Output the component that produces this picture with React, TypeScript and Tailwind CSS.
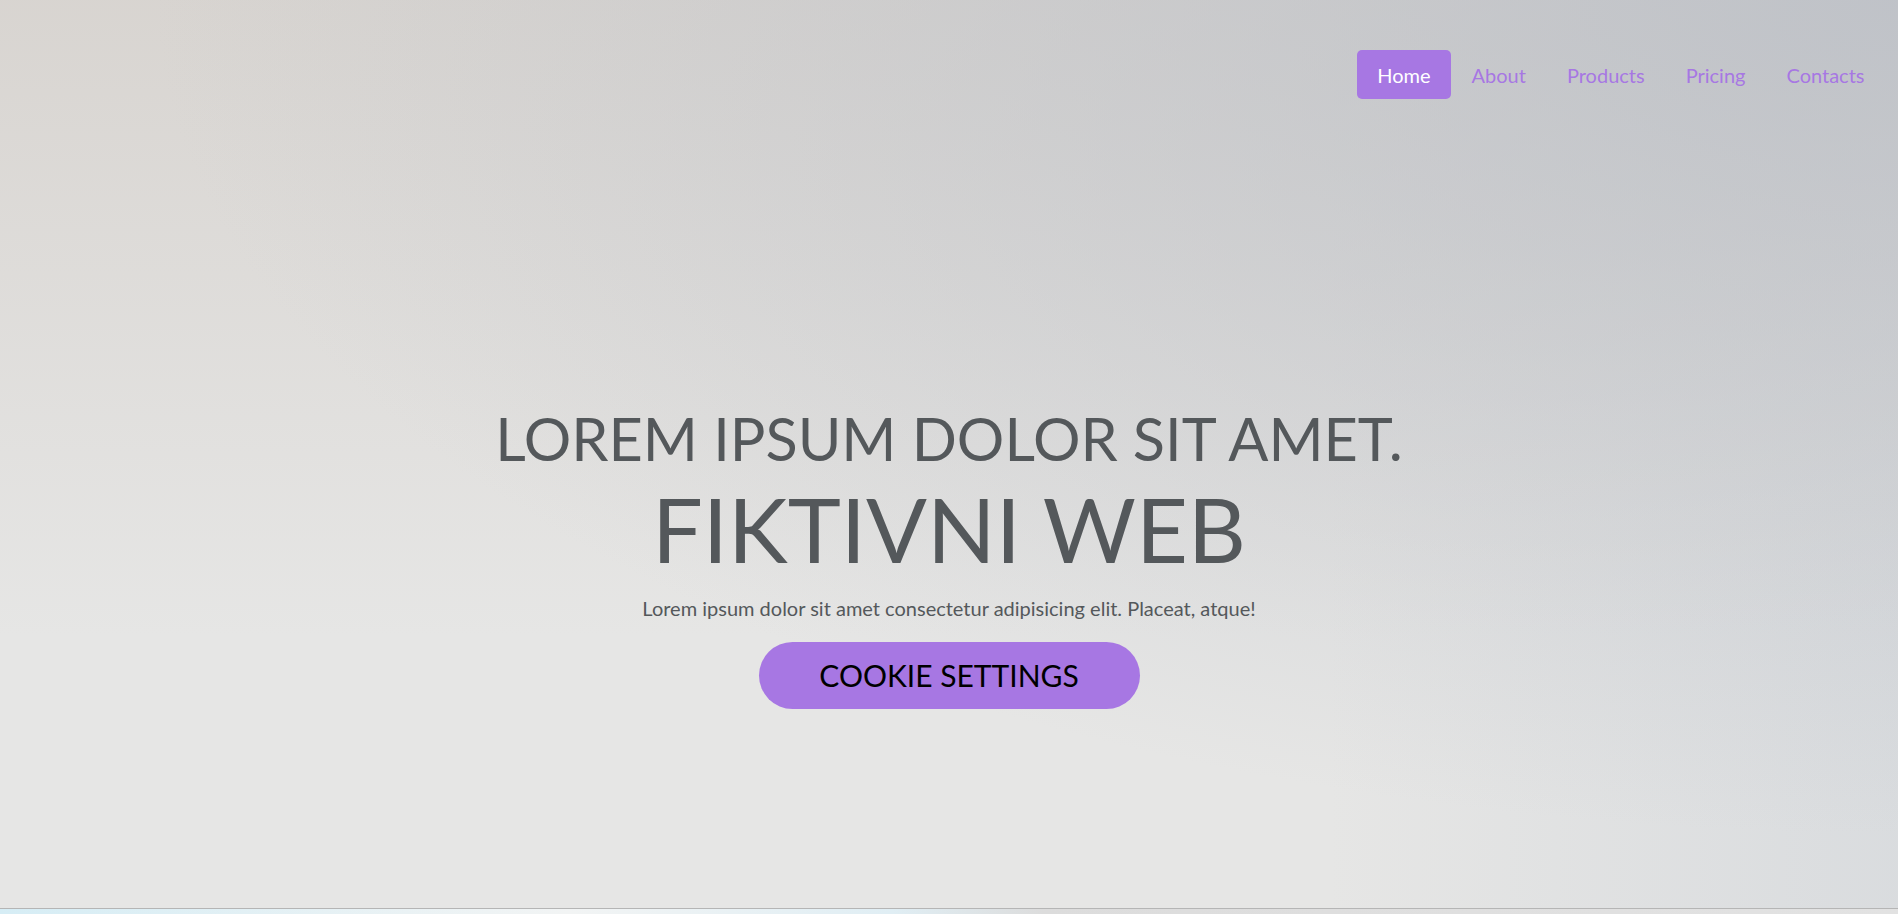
import React from 'react';

const links = ['Home', 'About', 'Products', 'Pricing', 'Contacts'];

const Nav: React.FC = () => {
  return (
    <nav className="flex justify-end pt-[50px] pr-[13px]">
      <ul className="flex items-center">
        {links.map((l, i) => (
          <li key={l}>
            <a
              href="#"
              className={
                i === 0
                  ? 'flex items-center h-[49px] px-[20.5px] rounded-[5px] bg-[#a777e3] text-white text-[20px]'
                  : 'flex items-center h-[49px] px-[20.5px] text-[#a777e3] text-[20px]'
              }
            >
              {l}
            </a>
          </li>
        ))}
      </ul>
    </nav>
  );
};

const App: React.FC = () => {
  return (
    <div className="font-['Lato',sans-serif] w-full h-[914px] overflow-hidden bg-[#e6e6e5]">
      <header className="h-[908px] bg-[radial-gradient(ellipse_at_100%_0%,rgba(188,192,199,0.85),rgba(188,192,199,0)_65%),linear-gradient(to_bottom,rgba(210,205,200,0.7),rgba(228,228,228,0)_70%),linear-gradient(to_right,rgba(0,0,0,0)_70%,rgba(205,210,216,0.5))]">
        <Nav />
        <div className="flex flex-col items-center mt-[303px] text-[#54585b]">
          <h1 className="text-[59.4px] leading-[72px]">LOREM IPSUM DOLOR SIT AMET.</h1>
          <h2 className="text-[90px] leading-[108px]">FIKTIVNI WEB</h2>
          <p className="text-[20px] leading-[30px] mt-[11px]">
            Lorem ipsum dolor sit amet consectetur adipisicing elit. Placeat, atque!
          </p>
          <button className="mt-[19px] w-[381px] h-[67px] rounded-full bg-[#a777e3] text-black text-[30px]">
            COOKIE SETTINGS
          </button>
        </div>
      </header>
      <div className="h-[6px] border-t border-[#b5b5b5] bg-[linear-gradient(to_right,#d6edf5,#f2f4f4_30%,#e0eef4_47%,#dcdcdc_55%,#e2e2e2)]" />
    </div>
  );
};

export default App;
